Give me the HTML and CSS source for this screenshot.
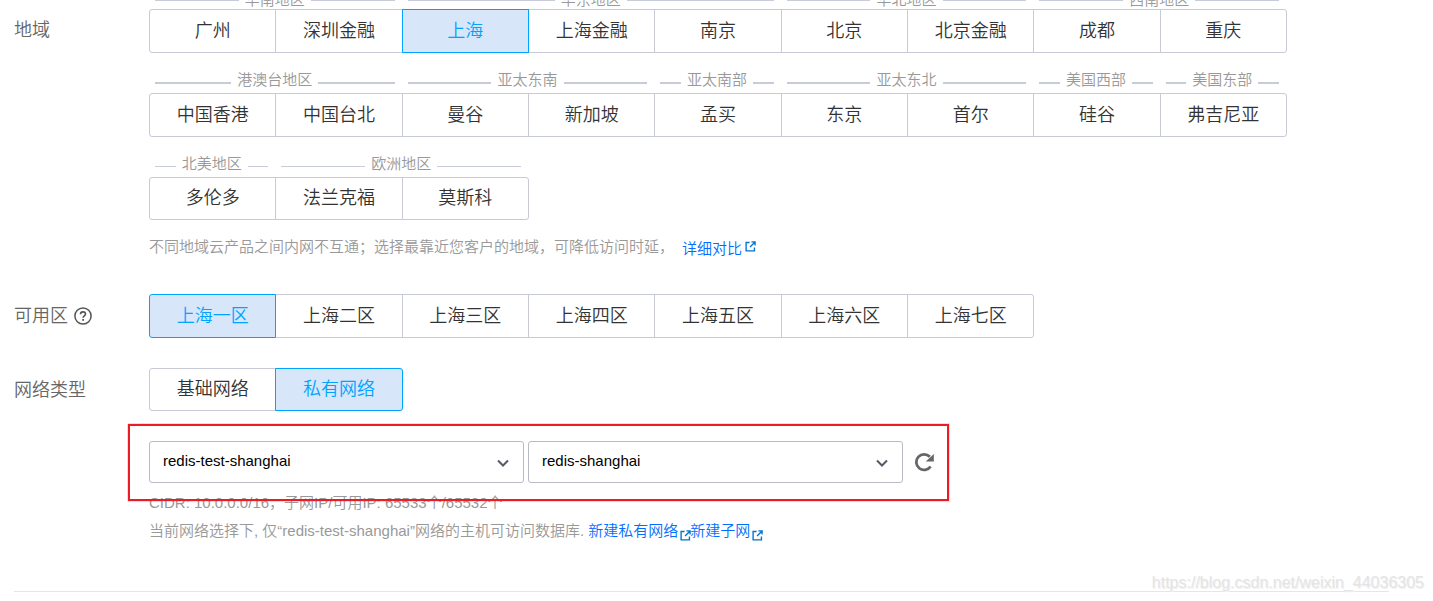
FILE: index.html
```html
<!DOCTYPE html>
<html lang="zh-CN">
<head>
<meta charset="utf-8">
<title>购买数据库</title>
<link rel="stylesheet" href="styles.css">
</head>
<body>
<svg class="defs" aria-hidden="true">
  <symbol id="external" viewBox="0 0 12 12">
    <path d="M5 1.7H1.2v9.1h9.1V7M7 1h4v4M11 1 5.5 6.5" fill="none" stroke="currentColor" stroke-width="1.5"/>
  </symbol>
  <symbol id="chevron" viewBox="0 0 12 8">
    <path d="m1 1.5 5 5 5-5" fill="none" stroke="currentColor" stroke-width="2"/>
  </symbol>
</svg>
<main class="form">
  <section class="field field-region">
    <h2 class="label label-region">地域</h2>
    <div class="content">
      <div class="options region-row first">
        <span class="area span-2">华南地区</span><span class="area span-3">华东地区</span><span class="area span-2">华北地区</span><span class="area span-2">西南地区</span>
        <button class="option start">广州</button><button class="option">深圳金融</button><button class="option active">上海</button><button class="option">上海金融</button><button class="option">南京</button><button class="option">北京</button><button class="option">北京金融</button><button class="option">成都</button><button class="option end">重庆</button>
      </div>
      <div class="options region-row middle">
        <span class="area span-2">港澳台地区</span><span class="area span-2">亚太东南</span><span class="area">亚太南部</span><span class="area span-2">亚太东北</span><span class="area">美国西部</span><span class="area">美国东部</span>
        <button class="option start">中国香港</button><button class="option">中国台北</button><button class="option">曼谷</button><button class="option">新加坡</button><button class="option">孟买</button><button class="option">东京</button><button class="option">首尔</button><button class="option">硅谷</button><button class="option end">弗吉尼亚</button>
      </div>
      <div class="options region-row compact">
        <span class="area">北美地区</span><span class="area span-2 row-end">欧洲地区</span>
        <button class="option start">多伦多</button><button class="option">法兰克福</button><button class="option end">莫斯科</button>
      </div>
      <p class="hint region-hint"><span>不同地域云产品之间内网不互通；选择最靠近您客户的地域，可降低访问时延，</span><a class="link compare" href="#">详细对比<svg class="external high"><use href="#external"/></svg></a></p>
    </div>
  </section>

  <section class="field field-zone">
    <h2 class="label">可用区
      <button class="help" aria-label="可用区说明"><svg viewBox="0 0 18 18"><circle cx="9" cy="9" r="8.1" fill="none" stroke="currentColor" stroke-width="1.5"/><path d="M6.5 7.3C6.5 5.7 7.6 4.9 9 4.9s2.5.8 2.5 2.1c0 1.8-2.4 1.8-2.4 3.7" fill="none" stroke="currentColor" stroke-width="1.6"/><path d="M8.2 11.9h1.8v1.8H8.2z" fill="currentColor"/></svg></button>
    </h2>
    <div class="content options">
      <button class="option active start">上海一区</button><button class="option">上海二区</button><button class="option">上海三区</button><button class="option">上海四区</button><button class="option">上海五区</button><button class="option">上海六区</button><button class="option end">上海七区</button>
    </div>
  </section>

  <section class="field">
    <h2 class="label">网络类型</h2>
    <div class="content">
      <div class="options compact">
        <button class="option start">基础网络</button><button class="option active end">私有网络</button>
      </div>
      <div class="network">
        <div class="select-box"><select class="select" aria-label="私有网络"><option>redis-test-shanghai</option></select><svg class="chevron"><use href="#chevron"/></svg></div>
        <div class="select-box"><select class="select" aria-label="子网"><option>redis-shanghai</option></select><svg class="chevron"><use href="#chevron"/></svg></div>
        <button class="refresh" aria-label="刷新"><svg viewBox="0 0 20 20"><path d="M16.6 14.4A7.8 7.8 0 1 1 15.8 4.8" fill="none" stroke="currentColor" stroke-width="2.8"/><path d="M19.8 2v7.4h-8z" fill="currentColor"/></svg></button>
      </div>
      <p class="hint">CIDR: 10.0.0.0/16，子网IP/可用IP: 65533个/65532个</p>
      <p class="hint">当前网络选择下, 仅“redis-test-shanghai”网络的主机可访问数据库. <a class="link" href="#">新建私有网络<svg class="external low"><use href="#external"/></svg></a><a class="link" href="#">新建子网<svg class="external low"><use href="#external"/></svg></a></p>
    </div>
  </section>
  <hr class="divider">
</main>
<div class="watermark">https://blog.csdn.net/weixin_44036305</div>
</body>
</html>
```
FILE: styles.css
```css
* {
  box-sizing: border-box;
}

body {
  margin: 0;
  background: #fff;
  color: #333;
  font-family: "Liberation Sans", "Noto Sans CJK SC DemiLight", "Noto Sans CJK SC", sans-serif;
  font-size: 15px;
  font-weight: 350;
  overflow: hidden;
}

button,
select {
  font: inherit;
}

.defs {
  position: absolute;
  width: 0;
  height: 0;
}

.form {
  padding: 0 44px 0 14px;
}

.field {
  display: grid;
  grid-template-columns: 135px minmax(0, 1137px);
  margin-bottom: 30px;
}

.field-region {
  margin-top: -13px;
  margin-bottom: 33px;
}

.label {
  display: flex;
  align-items: center;
  gap: 6px;
  height: 40px;
  margin: 0;
  color: #666;
  font-size: 18px;
  font-weight: inherit;
}

.label-region {
  margin-top: 21px;
}

.help {
  width: 18px;
  height: 18px;
  margin-top: 3px;
  padding: 0;
  border: 0;
  background: none;
  color: #555;
}

.help svg,
.refresh svg {
  display: block;
  width: 100%;
  height: 100%;
}

.options {
  display: grid;
  grid-template-columns: repeat(9, minmax(0, 1fr));
}

.region-row {
  margin-bottom: 18px;
}

.area {
  display: flex;
  align-items: flex-start;
  gap: 6px;
  height: 22px;
  padding: 0 7px 0 6px;
  color: #999;
  line-height: 18px;
  white-space: nowrap;
}

.area::before,
.area::after {
  content: "";
  flex: 1;
  height: 1px;
  margin-top: 11px;
  background: #c8ccd8;
}

.middle .area::before,
.middle .area::after {
  height: 2px;
}

.first .area {
  padding-top: 4px;
}

.first .area::before,
.first .area::after {
  margin-top: 9px;
}

.span-2 {
  grid-column: span 2;
}

.span-3 {
  grid-column: span 3;
}

.row-end {
  grid-column: 2 / 4;
}

.row-end + .option {
  grid-column: 1;
}

.option {
  height: 44px;
  margin-right: -1px;
  padding: 0 0 5px;
  border: 1px solid #c8cad5;
  background: #fff;
  color: #333;
  font-size: 18px;
  white-space: nowrap;
}

.compact .option {
  height: 43px;
}

.start {
  border-radius: 3px 0 0 3px;
}

.end {
  border-radius: 0 3px 3px 0;
}

.active {
  position: relative;
  border-color: #00a4ff;
  background: #d7e6f9;
  color: #00a4ff;
}

.hint {
  margin: 0;
  color: #999;
  line-height: 28px;
}

.region-hint {
  display: flex;
  gap: 8px;
  margin-top: -5px;
}

.compare {
  margin: 2px 0 -2px;
}

.link {
  color: #006eff;
  text-decoration: none;
}

.external {
  width: 11px;
  height: 11px;
  color: #0076d0;
}

.high {
  margin-left: 3px;
  vertical-align: 2px;
}

.low {
  margin-left: 2px;
  margin-right: -1px;
  vertical-align: -5px;
}

.network {
  position: relative;
  display: flex;
  align-items: center;
  gap: 4px;
  width: fit-content;
  max-width: 100%;
  margin: 30px 0 6px;
}

.network::after {
  content: "";
  position: absolute;
  inset: -17px -15px -18px -21px;
  border: 2px solid #ed1c24;
  box-shadow: 0 0 1px #ed1c24;
  pointer-events: none;
}

.select-box {
  position: relative;
  width: 375px;
}

.select {
  appearance: none;
  display: block;
  width: 100%;
  height: 42px;
  padding: 0 36px 3px 13px;
  border: 1px solid #b8bac6;
  border-radius: 3px;
  background: #fff;
  color: #000;
  font-weight: 400;
}

.chevron {
  position: absolute;
  top: 18px;
  right: 15px;
  width: 12px;
  height: 8px;
  color: #555a65;
  pointer-events: none;
}

.refresh {
  width: 20px;
  height: 20px;
  margin-left: 7px;
  padding: 0;
  border: 0;
  background: none;
  color: #666;
}

.divider {
  height: 1px;
  margin: 46px 0 0;
  border: 0;
  background: #e5e5ec;
}

.watermark {
  position: absolute;
  right: 9px;
  bottom: 8px;
  color: #e4e4e4;
  font-size: 16px;
  font-weight: 400;
  line-height: 20px;
  text-shadow: 1px 1px 0 #f2f2f2;
}
```
